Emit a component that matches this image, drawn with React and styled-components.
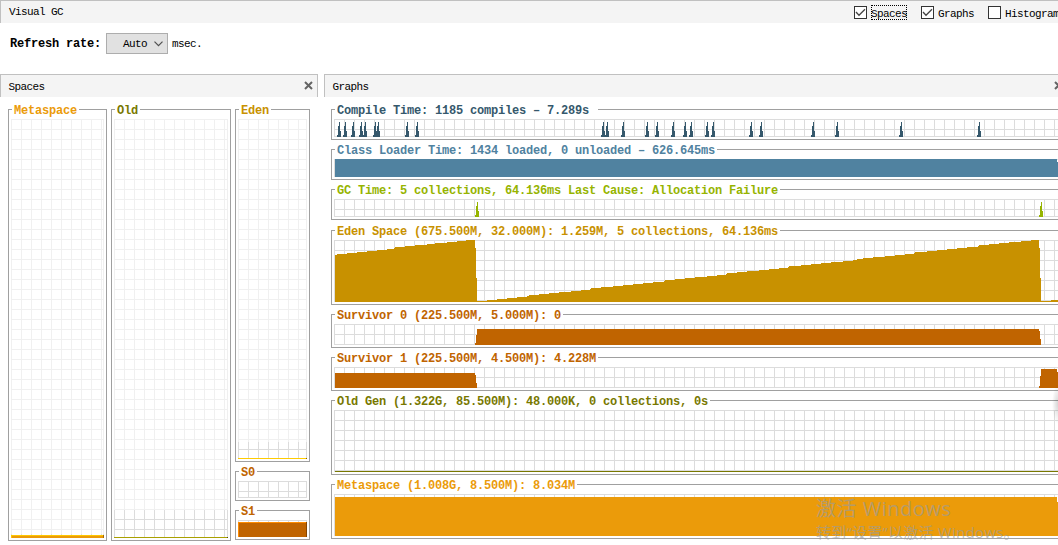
import React, { useState } from "react";
import styled, { createGlobalStyle } from "styled-components";

const GRID = "#dcdcdc";
const GRID_LIGHT = "#f0f0f0";

// [x, top] steps, measured from the top left corner of each plot
const edenSteps = [
  [1, 15], [3, 14], [13, 13], [23, 12], [33, 11], [43, 10], [53, 9], [60, 8],
  [61, 7], [71, 6], [81, 5], [93, 4], [101, 3], [113, 2], [123, 1], [132, 0],
  [141, 8], [142, 38], [143, 61], [153, 60], [163, 59], [173, 58], [183, 57],
  [193, 56], [195, 55], [205, 54], [215, 53], [225, 52], [237, 51], [247, 50],
  [256, 49], [257, 48], [267, 47], [279, 46], [289, 45], [299, 44], [309, 43],
  [319, 42], [330, 41], [331, 40], [341, 39], [351, 38], [361, 37], [373, 36],
  [383, 35], [392, 34], [393, 33], [403, 32], [413, 31], [425, 30], [435, 29],
  [445, 28], [454, 27], [455, 26], [467, 25], [477, 24], [487, 23], [497, 22],
  [509, 21], [519, 20], [523, 19], [529, 18], [539, 17], [551, 16], [561, 15],
  [571, 14], [580, 13], [581, 12], [593, 11], [603, 10], [613, 9], [623, 8],
  [633, 7], [644, 6], [645, 5], [655, 4], [665, 3], [675, 2], [687, 1],
  [697, 0], [705, 8], [706, 38], [707, 61], [717, 60],
];

const compilePeaks = [
  3, 9, 17, 25, 29, 39, 42, 71, 81, 267, 271, 287, 311, 321, 337, 349, 355, 371,
  377, 415, 425, 477, 501, 565, 643,
];

const graphs = [
  {
    title: "Compile Time: 1185 compiles – 7.289s ",
    color: "#35586c",
    height: 18,
    peaks: compilePeaks,
  },
  {
    title: "Class Loader Time: 1434 loaded, 0 unloaded – 626.645ms",
    color: "#5082a0",
    height: 18,
    steps: [[1, 0], [723, 3]],
  },
  {
    title: "GC Time: 5 collections, 64.136ms Last Cause: Allocation Failure",
    color: "#96b400",
    height: 18,
    peaks: [141, 705],
    spaceAfter: 1,
  },
  {
    title: "Eden Space (675.500M, 32.000M): 1.259M, 5 collections, 64.136ms",
    color: "#c89100",
    height: 62,
    steps: edenSteps,
  },
  {
    title: "Survivor 0 (225.500M, 5.000M): 0",
    color: "#c06400",
    height: 21,
    steps: [[141, 19], [142, 11], [143, 5], [705, 7], [706, 15], [707, 21]],
  },
  {
    title: "Survivor 1 (225.500M, 4.500M): 4.228M",
    color: "#c06400",
    height: 21,
    steps: [
      [1, 6], [141, 8], [142, 16], [143, 21], [705, 19], [706, 9], [707, 2],
      [723, 5],
    ],
  },
  {
    title: "Old Gen (1.322G, 85.500M): 48.000K, 0 collections, 0s",
    color: "#787800",
    height: 62,
    steps: [[1, 61]],
  },
  {
    title: "Metaspace (1.008G, 8.500M): 8.034M",
    color: "#eb9b0a",
    height: 42,
    steps: [[1, 3], [723, 8]],
  },
];

function stepPath(steps, height) {
  let d = `M${steps[0][0]} ${height}`;
  steps.forEach(([x, top]) => {
    d += `H${x}V${top}`;
  });
  return d + `H800V${height}Z`;
}

function peakPath(x, height) {
  return `M${x} ${height}v-2h1v-9h1v-4h1v9h1v6Z`;
}

function GridPattern({ id, color }) {
  return (
    <pattern id={id} width="10" height="10" patternUnits="userSpaceOnUse">
      <path d="M0 0H10V1H1V10H0Z" fill={color} />
    </pattern>
  );
}

function GraphPlot({ id, height, color, steps, peaks }) {
  return (
    <Plot $height={height}>
      <defs>
        <GridPattern id={id} color={GRID} />
      </defs>
      <rect width="100%" height={height} fill={`url(#${id})`} />
      <rect y={height - 1} width="100%" height="1" fill={GRID} />
      {steps && <path d={stepPath(steps, height)} fill={color} />}
      {peaks &&
        peaks.map((x) => <path key={x} d={peakPath(x, height)} fill={color} />)}
    </Plot>
  );
}

function SpacePlot({ id, width, height, committed, used, color, light, dark }) {
  const top = height - used;
  return (
    <Plot $height={height}>
      <defs>
        <GridPattern id={id} color={GRID_LIGHT} />
        <GridPattern id={`${id}-committed`} color={GRID} />
      </defs>
      <rect width={width} height={height} fill={`url(#${id})`} />
      <rect x={width - 1} width="1" height={height} fill={GRID_LIGHT} />
      <rect
        y={height - committed}
        width={width}
        height={committed}
        fill={`url(#${id}-committed)`}
      />
      <rect
        x={width - 1}
        y={height - committed}
        width="1"
        height={committed}
        fill={GRID}
      />
      <rect y={height - 1} width={width} height="1" fill={GRID} />
      {used > 0 && (
        <g>
          <rect y={top} width={width} height={used} fill={color} />
          <rect y={top} width={width} height="1" fill={light} />
          <rect y={top} width="1" height={used} fill={light} />
          <rect x={width - 1} y={top} width="1" height={used} fill={dark} />
        </g>
      )}
    </Plot>
  );
}

function Space({ title, titleColor, width, ...plot }) {
  return (
    <Frame $width={width}>
      <Title $color={titleColor}>{title}</Title>
      <SpacePlot id={`space-${title}`} width={width - 6} {...plot} />
    </Frame>
  );
}

function CloseIcon() {
  return (
    <Close viewBox="0 0 9 9">
      <path d="M1 1L8 8M8 1L1 8" stroke="#646464" strokeWidth="2" />
    </Close>
  );
}

function Option({ label, checked, focused, onToggle }) {
  return (
    <OptionLabel onClick={onToggle}>
      <Box>
        {checked && (
          <svg width="11" height="11" viewBox="0 0 11 11">
            <path
              d="M1 5L4 8.2L10 2.2"
              fill="none"
              stroke="#444"
              strokeWidth="1.3"
            />
          </svg>
        )}
      </Box>
      <OptionText $focused={focused}>{label}</OptionText>
    </OptionLabel>
  );
}

export default function App() {
  const [shown, setShown] = useState({
    Spaces: true,
    Graphs: true,
    Histogram: false,
  });

  return (
    <Window>
      <GlobalStyle />
      <TopBar>
        <span>Visual GC</span>
        <Options>
          {Object.keys(shown).map((name) => (
            <Option
              key={name}
              label={name}
              checked={shown[name]}
              focused={name === "Spaces"}
              onToggle={() => setShown({ ...shown, [name]: !shown[name] })}
            />
          ))}
        </Options>
      </TopBar>
      <RefreshRow>
        <RefreshLabel>Refresh rate:</RefreshLabel>
        <Select>
          <SelectValue>Auto</SelectValue>
          <svg width="9" height="6" viewBox="0 0 9 6">
            <path
              d="M0.5 0.7L4.5 4.7L8.5 0.7"
              fill="none"
              stroke="#505050"
              strokeWidth="1.2"
            />
          </svg>
        </Select>
        <Unit>msec.</Unit>
      </RefreshRow>
      <Panels>
        <SpacesPanel>
          <PanelHeader $inset>
            Spaces
            <CloseIcon />
          </PanelHeader>
          <SpacesBody>
            <Space
              title="Metaspace"
              titleColor="#eb9b0a"
              width={99}
              height={419}
              committed={4}
              used={3}
              color="#eb9b0a"
              light="#ffc800"
              dark="#a46c07"
            />
            <Space
              title="Old"
              titleColor="#787800"
              width={120}
              height={419}
              committed={28}
              used={1}
              color="#787800"
              light="#aaa000"
              dark="#505000"
            />
            <Generation>
              <Space
                title="Eden"
                titleColor="#c89100"
                width={75}
                height={340}
                committed={17}
                used={1}
                color="#c89100"
                light="#ffcc00"
                dark="#8c6500"
              />
              <Space
                title="S0"
                titleColor="#c06400"
                width={75}
                height={17}
                committed={17}
                used={0}
              />
              <Space
                title="S1"
                titleColor="#c06400"
                width={75}
                height={17}
                committed={17}
                used={15}
                color="#c06400"
                light="#ff8c00"
                dark="#864600"
              />
            </Generation>
          </SpacesBody>
        </SpacesPanel>
        <GraphsPanel>
          <PanelHeader>
            Graphs
            <CloseIcon />
          </PanelHeader>
          <GraphsBody>
            {graphs.map((graph, i) => (
              <Frame key={graph.title} $spaceAfter={graph.spaceAfter}>
                <Title $color={graph.color}>{graph.title}</Title>
                <GraphPlot id={`graph-${i}`} {...graph} />
              </Frame>
            ))}
          </GraphsBody>
        </GraphsPanel>
      </Panels>
      <EdgeShadow />
      <Watermark>
        <WatermarkTitle>激活 Windows</WatermarkTitle>
        <WatermarkText>转到“设置”以激活 Windows。</WatermarkText>
      </Watermark>
    </Window>
  );
}

const GlobalStyle = createGlobalStyle`
  body {
    margin: 0;
    background: #fff;
    overflow: hidden;
  }
`;

const Window = styled.div`
  position: relative;
  width: 1064px;
  height: 545px;
  overflow: hidden;
  box-sizing: border-box;
  background: #fff;
  color: #000;
  font-family: "Liberation Mono", monospace;
  font-size: 11px;
  letter-spacing: -0.6px;
  line-height: 13px;
  white-space: pre;
`;

const TopBar = styled.div`
  display: flex;
  justify-content: space-between;
  box-sizing: border-box;
  height: 23px;
  padding: 5px 5px 0 8px;
  border-top: 1px solid #c0c0c0;
  border-left: 1px solid #c0c0c0;
  background: #f4f4f4;
`;

const Options = styled.div`
  display: flex;
  gap: 14px;
`;

const OptionLabel = styled.div`
  display: flex;
  gap: 4px;
  height: 13px;
`;

const Box = styled.span`
  box-sizing: border-box;
  width: 13px;
  height: 13px;
  border: 1px solid #333;
  background: #fff;

  svg {
    display: block;
  }
`;

const OptionText = styled.span`
  box-sizing: border-box;
  height: 15px;
  margin-top: -1px;
  padding-top: 3px;
  line-height: 12px;
  outline: ${(props) => (props.$focused ? "1px dotted #000" : "none")};
  outline-offset: -1px;
`;

const RefreshRow = styled.div`
  display: flex;
  align-items: center;
  height: 21px;
  padding: 10px 0 20px 10px;
`;

const RefreshLabel = styled.span`
  width: 96px;
  padding-top: 2px;
  font-size: 12px;
  font-weight: bold;
  letter-spacing: -0.2px;
`;

const Select = styled.div`
  display: flex;
  align-items: center;
  justify-content: flex-end;
  gap: 7px;
  box-sizing: border-box;
  width: 62px;
  height: 21px;
  margin-right: 4px;
  padding-right: 4px;
  border: 1px solid #adadad;
  background: #e1e1e1;
`;

const SelectValue = styled.span`
  padding-top: 2px;
`;

const Unit = styled.span`
  padding-top: 2px;
`;

const Panels = styled.div`
  display: flex;
  gap: 6px;
`;

const SpacesPanel = styled.div`
  width: 318px;
`;

const GraphsPanel = styled.div`
  flex: 1;
  min-width: 0;
`;

const PanelHeader = styled.div`
  display: flex;
  justify-content: space-between;
  box-sizing: border-box;
  height: 23px;
  padding: 6px ${(props) => (props.$inset ? "4px" : "0")} 0 7.5px;
  border: 1px solid #c0c0c0;
  border-bottom: none;
  background: #f4f4f4;
`;

const Close = styled.svg`
  width: 9px;
  height: 9px;
`;

const SpacesBody = styled.div`
  display: flex;
  gap: 4px;
  padding: 7px 8px 0;
`;

const Generation = styled.div`
  display: flex;
  flex-direction: column;
  gap: 4px;
`;

const GraphsBody = styled.div`
  display: flex;
  flex-direction: column;
  gap: 4px;
  padding: 7px 0 0 7px;
`;

const Frame = styled.fieldset`
  box-sizing: border-box;
  width: ${(props) => (props.$width ? `${props.$width}px` : "auto")};
  min-width: 0;
  margin: 0 0 ${(props) => props.$spaceAfter || 0}px;
  padding: 4px 2px 2px;
  border: 1px solid #a0a0a0;
`;

const Title = styled.legend`
  height: 11px;
  margin-left: 1px;
  padding: 0 2px;
  color: ${(props) => props.$color};
  font-size: 12px;
  font-weight: bold;
  letter-spacing: -0.2px;
  line-height: 14px;
`;

const Plot = styled.svg`
  display: block;
  width: 100%;
  height: ${(props) => props.$height}px;
  shape-rendering: crispEdges;
`;

const EdgeShadow = styled.div`
  position: absolute;
  left: 1052px;
  top: 384px;
  width: 12px;
  height: 40px;
  background: radial-gradient(
    closest-side,
    rgba(0, 0, 0, 0.16),
    rgba(0, 0, 0, 0)
  );
`;

const Watermark = styled.div`
  position: absolute;
  left: 816px;
  top: 496px;
  color: rgba(150, 155, 160, 0.65);
  font-family: "Open Sans", "Noto Sans CJK SC", sans-serif;
  letter-spacing: 0;
`;

const WatermarkTitle = styled.div`
  font-size: 20px;
  letter-spacing: 0.5px;
  line-height: 26px;
`;

const WatermarkText = styled.div`
  font-size: 15px;
  letter-spacing: 0.25px;
  line-height: 21px;
`;
